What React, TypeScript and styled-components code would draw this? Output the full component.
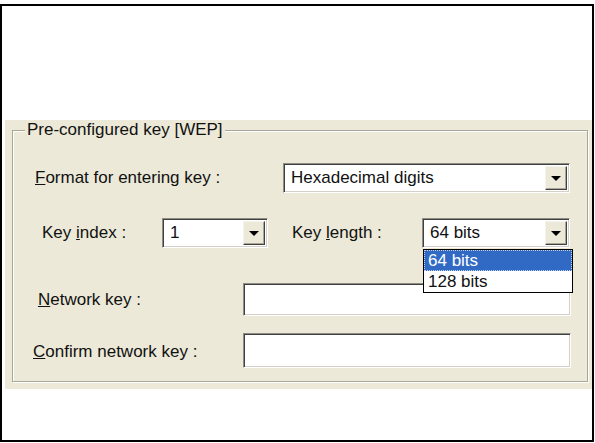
import React from "react";
import styled, { createGlobalStyle } from "styled-components";

const Global = createGlobalStyle`
  html, body { margin: 0; padding: 0; background: #fff; }
  body { font-family: "Liberation Sans", Arial, sans-serif; }
  * { box-sizing: border-box; }
`;

const Frame = styled.div`
  margin-top: 4px;
  width: 594px;
  height: 438px;
  border: 2px solid #000;
  background: #fff;
  display: flex;
  flex-direction: column;
`;

const TopSpace = styled.div`
  height: 114px;
  flex: none;
`;

const Band = styled.div`
  margin-left: 3px;
  height: 269px;
  background: #ece9d8;
  padding: 1px 4px 0 7px;
  font-size: 17px;
  letter-spacing: 0;
  color: #111;
`;

const Group = styled.fieldset`
  margin: 0;
  padding: 0 0 13px 0;
  min-inline-size: 0;
  border: 1px solid #a8a697;
  box-shadow: inset 1px 1px 0 #fff, 1px 1px 0 #fff;
  display: flex;
  flex-direction: column;
`;

const Title = styled.legend`
  margin-left: 12px;
  padding: 0 2px;
  line-height: 18px;
  background: #ece9d8;
`;

const Row = styled.div<{ $cols: string; $mt: number; $h: number }>`
  display: grid;
  grid-template-columns: ${(p) => p.$cols};
  align-items: center;
  margin-top: ${(p) => p.$mt}px;
  height: ${(p) => p.$h}px;
`;

const Label = styled.div<{ $indent: number; $shift?: number }>`
  padding-left: ${(p) => p.$indent}px;
  margin-top: ${(p) => p.$shift ?? 0}px;
  white-space: nowrap;
  line-height: 18px;
`;

const Sunken = styled.div`
  position: relative;
  height: 100%;
  background: #fff;
  border-top: 1px solid #8e8d84;
  border-left: 1px solid #8e8d84;
  border-right: 1px solid #fff;
  border-bottom: 1px solid #fff;
  box-shadow: inset 1px 1px 0 #404040, inset -1px -1px 0 #d4d0c8;
  display: flex;
  align-items: center;
`;

const ComboText = styled.span`
  flex: 1;
  padding-left: 7px;
  white-space: nowrap;
  line-height: 18px;
`;

const DropButton = styled.div`
  flex: none;
  width: 22px;
  height: calc(100% - 4px);
  margin-right: 2px;
  background: #ece9d8;
  border-top: 1px solid #f4f3ee;
  border-left: 1px solid #f4f3ee;
  border-right: 1px solid #404040;
  border-bottom: 1px solid #404040;
  box-shadow: inset -1px -1px 0 #aca899;
  display: flex;
  align-items: center;
  justify-content: center;
`;

const Arrow = styled.div`
  width: 0;
  height: 0;
  border-left: 5px solid transparent;
  border-right: 5px solid transparent;
  border-top: 5px solid #000;
  margin-top: 1px;
`;

const List = styled.div`
  position: absolute;
  top: calc(100% + 2px);
  left: 0;
  width: 150px;
  background: #fff;
  border: 1px solid #000;
  z-index: 2;
`;

const Item = styled.div<{ $sel?: boolean }>`
  height: 21px;
  line-height: 19px;
  padding-left: 3px;
  background: ${(p) => (p.$sel ? "#316ac5" : "#fff")};
  color: ${(p) => (p.$sel ? "#fff" : "#111")};
  border: 1px dotted ${(p) => (p.$sel ? "#c8d4ee" : "transparent")};
  white-space: nowrap;
`;

function Combo({ value, open }: { value: string; open?: string[] }) {
  return (
    <Sunken>
      <ComboText>{value}</ComboText>
      <DropButton>
        <Arrow />
      </DropButton>
      {open && (
        <List>
          {open.map((o) => (
            <Item key={o} $sel={o === value}>
              {o}
            </Item>
          ))}
        </List>
      )}
    </Sunken>
  );
}

export default function App() {
  return (
    <>
      <Global />
      <Frame>
        <TopSpace />
        <Band>
          <Group>
            <Title>Pre-configured key [WEP]</Title>
            <Row $cols="270px 287px" $mt={24} $h={30}>
              <Label $indent={22}>
                <u>F</u>ormat for entering key :
              </Label>
              <Combo value="Hexadecimal digits" />
            </Row>
            <Row $cols="149px 106px 24px 130px 148px" $mt={25} $h={30}>
              <Label $indent={29}>
                Key <u>i</u>ndex :
              </Label>
              <Combo value="1" />
              <span />
              <Label $indent={0}>
                Key <u>l</u>ength :
              </Label>
              <Combo value="64 bits" open={["64 bits", "128 bits"]} />
            </Row>
            <Row $cols="230px 328px" $mt={35} $h={33}>
              <Label $indent={25} $shift={0}>
                <u>N</u>etwork key :
              </Label>
              <Sunken />
            </Row>
            <Row $cols="230px 328px" $mt={17} $h={35}>
              <Label $indent={20} $shift={3}>
                <u>C</u>onfirm network key :
              </Label>
              <Sunken />
            </Row>
          </Group>
        </Band>
      </Frame>
    </>
  );
}
